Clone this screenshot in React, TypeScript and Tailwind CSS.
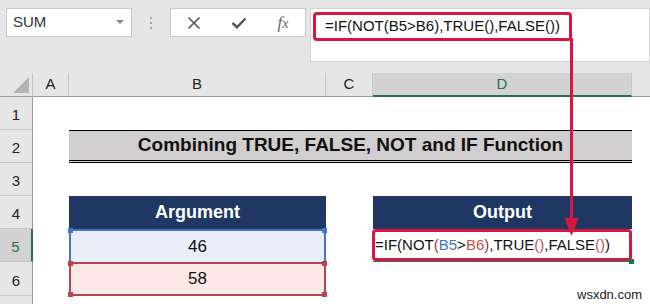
import React from "react"

const RED = "#d6173f"

const RowHead = ({ n, active }: { n: number; active?: boolean }) => (
  <div
    className={
      "flex items-end justify-center pb-[3px] border-b border-[#c6c6c6] text-[15px] " +
      (active
        ? "bg-[#d2d2d2] text-[#217346] border-r-2 border-r-[#217346]"
        : "bg-[#e6e6e6] text-[#222] border-r border-r-[#9b9b9b]")
    }
  >
    {n}
  </div>
)

const Handle = ({ pos, color }: { pos: string; color: string }) => (
  <span className={"absolute w-[5px] h-[5px] " + pos} style={{ backgroundColor: color }} />
)

export default function App() {
  return (
    <div className="relative w-[650px] h-[304px] overflow-hidden bg-white font-['Liberation_Sans',Arial,sans-serif]">
      {/* Toolbar */}
      <div className="h-[73px] bg-[#e6e6e6] flex items-start pt-2 pl-[6px]">
        <div className="w-[126px] h-[29px] bg-white border border-[#c9c9c9] flex items-center justify-between pl-[6px] pr-[7px]">
          <span className="text-[15px] text-[#333]">SUM</span>
          <svg width="8" height="5" viewBox="0 0 8 5">
            <polygon points="0,0 8,0 4,4" fill="#8a8a8a" />
          </svg>
        </div>
        <div className="w-[38px] h-[29px] flex flex-col items-center justify-center gap-[3px]">
          <span className="w-[2px] h-[2px] bg-[#a5a5a5]" />
          <span className="w-[2px] h-[2px] bg-[#a5a5a5]" />
          <span className="w-[2px] h-[2px] bg-[#a5a5a5]" />
        </div>
        <div className="w-[136px] h-[29px] bg-white border border-[#c9c9c9] flex items-center">
          <div className="w-[46px] flex justify-center">
            <svg width="14" height="14" viewBox="0 0 14 14">
              <path d="M1.5 1.5 L12.5 12.5 M12.5 1.5 L1.5 12.5" stroke="#555" strokeWidth="1.6" />
            </svg>
          </div>
          <div className="w-[44px] flex justify-center">
            <svg width="16" height="12" viewBox="0 0 16 12">
              <path d="M1.5 6 L6 10.2 L14.5 1.5" stroke="#555" strokeWidth="2.4" fill="none" />
            </svg>
          </div>
          <div className="flex-1 flex justify-center">
            <span className="font-['Liberation_Serif',serif] italic text-[17px] text-[#666]">
              f<span className="text-[14px]">x</span>
            </span>
          </div>
        </div>
        <div className="ml-[4px] flex-1 h-[54px] bg-white border border-[#d4d4d4] pt-[3px] pl-[2px]">
          <div className="w-[259px] h-[29px] border-[3px] border-[#d6173f] rounded-[4px] flex items-center pl-[9px] text-[15px] text-[#111]">
            =IF(NOT(B5&gt;B6),TRUE(),FALSE())
          </div>
        </div>
      </div>

      {/* Sheet */}
      <div className="grid grid-cols-[33px_36px_257px_47px_259px_1fr] grid-rows-[24px_33px_33px_33px_33px_33px_34px_8px]">
        {/* column headers */}
        <div className="bg-[#e6e6e6] border-b border-[#9b9b9b] border-r border-r-[#c6c6c6] flex items-end justify-end pr-[3px] pb-[3px]">
          <svg width="16" height="16" viewBox="0 0 16 16">
            <polygon points="16,0 16,16 0,16" fill="#b4b4b4" />
          </svg>
        </div>
        <div className="bg-[#e6e6e6] border-b border-[#9b9b9b] border-r border-r-[#c6c6c6] flex items-center justify-center text-[15px] text-[#222]">A</div>
        <div className="bg-[#e6e6e6] border-b border-[#9b9b9b] border-r border-r-[#c6c6c6] flex items-center justify-center text-[15px] text-[#222]">B</div>
        <div className="bg-[#e6e6e6] border-b border-[#9b9b9b] border-r border-r-[#c6c6c6] flex items-center justify-center text-[15px] text-[#222]">C</div>
        <div className="bg-[#d2d2d2] border-b-2 border-[#217346] border-r border-r-[#c6c6c6] flex items-center justify-center text-[15px] text-[#217346]">D</div>
        <div className="bg-[#e6e6e6] border-b border-[#9b9b9b]" />

        {/* row 1 */}
        <RowHead n={1} />
        <div className="col-span-5" />

        {/* row 2 */}
        <RowHead n={2} />
        <div />
        <div className="col-span-3 bg-[#d0cece] border-t border-black border-b-[3px] border-b-black border-double flex items-center justify-center font-bold text-[19px] text-[#111]">
          Combining TRUE, FALSE, NOT and IF Function
        </div>
        <div />

        {/* row 3 */}
        <RowHead n={3} />
        <div className="col-span-5" />

        {/* row 4 */}
        <RowHead n={4} />
        <div />
        <div className="bg-[#203764] text-white font-bold text-[18px] flex items-center justify-center">Argument</div>
        <div />
        <div className="bg-[#203764] text-white font-bold text-[18px] flex items-center justify-center">Output</div>
        <div />

        {/* row 5 */}
        <RowHead n={5} active />
        <div />
        <div className="relative bg-[#e9eff8] border-2 border-b-0 border-[#4472c4] flex items-center justify-center text-[17px] text-[#111]">
          46
          <Handle pos="-left-[3px] -top-[3px]" color="#4472c4" />
          <Handle pos="-right-[3px] -top-[3px]" color="#4472c4" />
        </div>
        <div />
        <div className="relative border-b border-[#217346]">
          <div className="absolute -left-px top-0 right-0 bottom-0 border-[3px] border-[#d6173f] rounded-[4px] flex items-center text-[15px] text-[#111] whitespace-nowrap">
            <span>
              =IF(NOT<span className="text-[#a0362f]">(</span>
              <span className="text-[#4472c4]">B5</span>&gt;
              <span className="text-[#c0504d]">B6</span>
              <span className="text-[#a0362f]">)</span>,TRUE<span className="text-[#c0504d]">()</span>,FALSE
              <span className="text-[#c0504d]">()</span>)
            </span>
          </div>
          <span className="absolute -right-[2px] -bottom-[3px] w-[5px] h-[5px] bg-[#217346]" />
        </div>
        <div />

        {/* row 6 */}
        <RowHead n={6} />
        <div />
        <div className="relative bg-[#fbe8e7] border-2 border-[#b8454c] flex items-center justify-center text-[17px] text-[#111]">
          58
          <Handle pos="-left-[3px] -top-[3px]" color="#b8454c" />
          <Handle pos="-right-[3px] -top-[3px]" color="#b8454c" />
          <Handle pos="-left-[3px] -bottom-[3px]" color="#b8454c" />
          <Handle pos="-right-[3px] -bottom-[3px]" color="#b8454c" />
        </div>
        <div />
        <div />
        <div />

        {/* row 7 */}
        <div className="bg-[#e6e6e6] border-r border-[#9b9b9b]" />
        <div className="col-span-5" />
      </div>

      {/* arrow annotation */}
      <svg className="absolute left-0 top-0 pointer-events-none" width="650" height="304">
        <line x1="571.5" y1="38" x2="571.5" y2="222" stroke={RED} strokeWidth="3" />
        <polygon points="564.5,218 578.5,218 571.5,236" fill={RED} />
      </svg>

      <span className="absolute left-[577px] top-[285px] text-[13px] text-[#222]">wsxdn.com</span>
    </div>
  )
}
